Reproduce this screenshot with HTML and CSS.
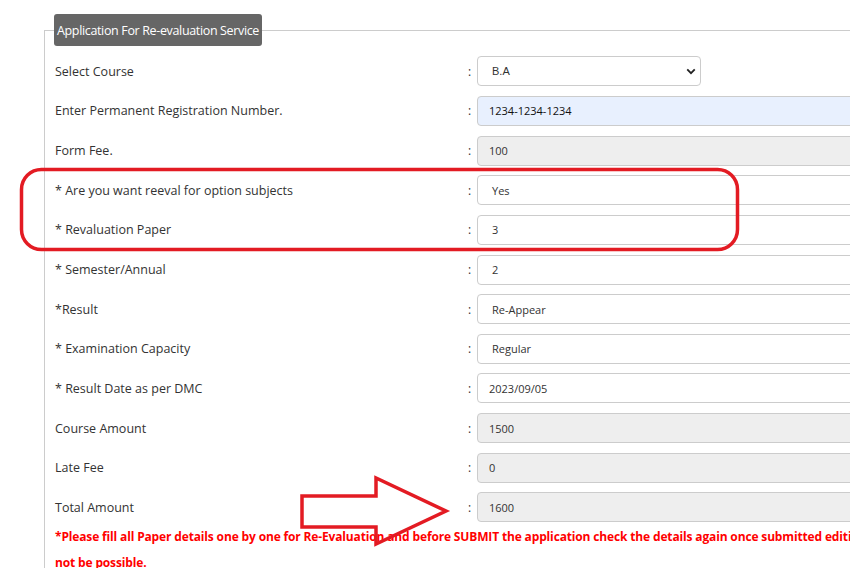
FILE: index.html
```html
<!DOCTYPE html>
<html>
<head>
<meta charset="utf-8">
<link rel="stylesheet" href="styles.css">
</head>
<body>
<div class="page">
  <fieldset class="box">
    <legend class="legend">Application For Re-evaluation Service</legend>
    <div class="rows">
      <div class="row"><span class="lbl">Select Course</span><span class="colon">:</span>
        <div class="sel"><span>B.A</span><svg class="chev" viewBox="0 0 12 8" width="10" height="7"><path d="M1.5 1.5 L6 6 L10.5 1.5" fill="none" stroke="#222" stroke-width="2.2"/></svg></div></div>
      <div class="row"><span class="lbl">Enter Permanent Registration Number.</span><span class="colon">:</span><div class="inp auto">1234-1234-1234</div></div>
      <div class="row"><span class="lbl">Form Fee.</span><span class="colon">:</span><div class="inp dis">100</div></div>
      <div class="row"><span class="lbl">* Are you want reeval for option subjects</span><span class="colon">:</span><div class="inp opt">Yes</div></div>
      <div class="row"><span class="lbl">* Revaluation Paper</span><span class="colon">:</span><div class="inp opt">3</div></div>
      <div class="row"><span class="lbl">* Semester/Annual</span><span class="colon">:</span><div class="inp opt">2</div></div>
      <div class="row"><span class="lbl">*Result</span><span class="colon">:</span><div class="inp opt">Re-Appear</div></div>
      <div class="row"><span class="lbl">* Examination Capacity</span><span class="colon">:</span><div class="inp opt">Regular</div></div>
      <div class="row"><span class="lbl">* Result Date as per DMC</span><span class="colon">:</span><div class="inp">2023/09/05</div></div>
      <div class="row"><span class="lbl">Course Amount</span><span class="colon">:</span><div class="inp dis">1500</div></div>
      <div class="row"><span class="lbl">Late Fee</span><span class="colon">:</span><div class="inp dis">0</div></div>
      <div class="row"><span class="lbl">Total Amount</span><span class="colon">:</span><div class="inp dis">1600</div></div>
    </div>
    <p class="note">*Please fill all Paper details one by one for Re-Evaluation and before SUBMIT the application check the details again once submitted editing will not be possible.</p>
  </fieldset>
  <svg class="mark" width="850" height="568" viewBox="0 0 850 568">
    <rect x="21.5" y="169.5" width="716" height="80" rx="20" ry="20" fill="none" stroke="#e31b23" stroke-width="3.5"/>
    <polygon points="302,496 376,496 376,478 446,511 376,544 376,527 302,527" fill="none" stroke="#e31b23" stroke-width="3.5" stroke-linejoin="miter"/>
  </svg>
</div>
</body>
</html>
```
FILE: styles.css
```css
html, body {
  margin: 0;
  padding: 0;
  overflow: hidden;
  background: #fff;
}
body {
  width: 850px;
  height: 568px;
  font-family: "Open Sans", "DejaVu Sans", sans-serif;
  color: #333;
}
.page {
  position: relative;
  width: 1000px;
  padding: 14px 0 0 44px;
}
.box {
  margin: 0;
  width: 880px;
  border: 1px solid #ccc;
  border-bottom: none;
  padding: 0 0 0 10px;
}
.legend {
  background: #666;
  color: #fff;
  font-size: 12.5px;
  letter-spacing: -0.35px;
  height: 32px;
  line-height: 33px;
  padding: 0 3px;
  border-radius: 3px;
  margin-left: -1px;
  box-sizing: border-box;
}
.rows {
  padding-top: 5.5px;
  display: flex;
  flex-direction: column;
}
.row {
  height: 39.65px;
  display: grid;
  grid-template-columns: 413px 9px 1fr;
  align-items: center;
  font-size: 12.5px;
}
.lbl {
  white-space: nowrap;
}
.colon {
  font-size: 12px;
}
.inp, .sel {
  height: 30px;
  box-sizing: border-box;
  border: 1px solid #ccc;
  border-radius: 4px;
  display: flex;
  align-items: center;
  padding-left: 11px;
  font-size: 11px;
  color: #333;
}
.auto {
  background: #e8f0fe;
  color: #111;
}
.dis {
  background: #eee;
}
.opt {
  padding-left: 14px;
}
.sel {
  width: 224px;
  padding: 0 4px 0 14px;
  justify-content: space-between;
  font-family: "Liberation Sans", Arial, sans-serif;
  font-size: 11px;
}
.note {
  margin: -3px 0 0 0;
  color: #f00;
  font-weight: bold;
  font-size: 12px;
  line-height: 26px;
  width: 855px;
  letter-spacing: -0.15px;
}
.mark {
  position: absolute;
  left: 0;
  top: 0;
  pointer-events: none;
}
```
